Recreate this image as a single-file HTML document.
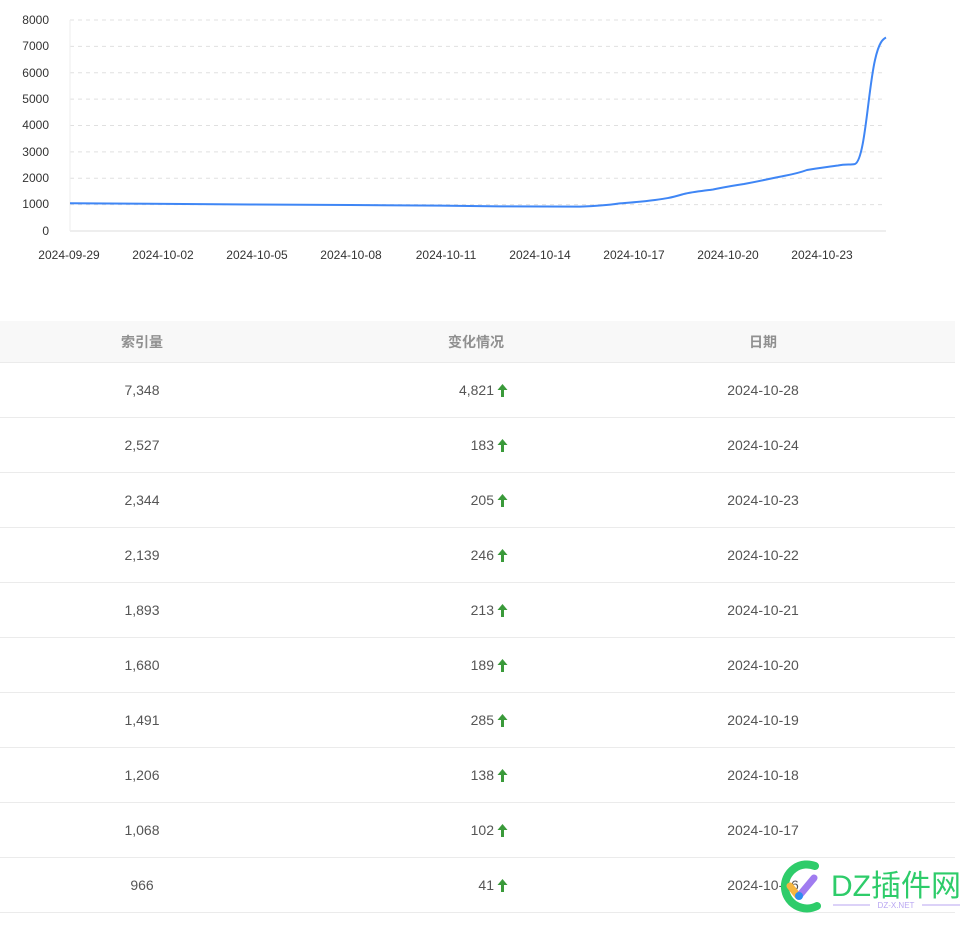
<!DOCTYPE html>
<html><head><meta charset="utf-8"><style>
body{margin:0;background:#fff;font-family:"Liberation Sans","Noto Sans CJK SC",sans-serif;width:980px;height:929px;overflow:hidden;position:relative}
svg text{font-family:"Liberation Sans",sans-serif;font-size:12px;fill:#333}
.tbl{position:absolute;left:0;top:321px;width:955px}
.row{height:54px;border-bottom:1px solid #ebebeb;position:relative;font-size:14px;color:#555}
.hd{height:41px;background:#f8f8f8;border-bottom:1px solid #ebebeb;color:#909090;font-weight:bold}
.c1,.c3{position:absolute;width:200px;text-align:center}
.c1{left:42px}.c3{left:663px}
.c2{position:absolute;right:447px;text-align:right}
.hd .c2{right:auto;left:376px;width:200px;text-align:center}
.row>div{top:50%;transform:translateY(-50%);line-height:16px}
.ar{display:inline-block;vertical-align:-2px;margin-left:3px}
</style></head><body>
<svg width="980" height="300" style="position:absolute;left:0;top:0">
<g stroke="#e0e0e0" stroke-dasharray="4,4">
<line x1="70" x2="886" y1="20" y2="20"/><line x1="70" x2="886" y1="46.4" y2="46.4"/><line x1="70" x2="886" y1="72.8" y2="72.8"/><line x1="70" x2="886" y1="99.1" y2="99.1"/><line x1="70" x2="886" y1="125.5" y2="125.5"/><line x1="70" x2="886" y1="151.9" y2="151.9"/><line x1="70" x2="886" y1="178.3" y2="178.3"/><line x1="70" x2="886" y1="204.6" y2="204.6"/>
</g>
<line x1="70" x2="886" y1="231" y2="231" stroke="#ddd"/>
<line x1="70" x2="70" y1="20" y2="231" stroke="#eee"/>
<g text-anchor="end"><text x="49" y="24">8000</text><text x="49" y="50">7000</text><text x="49" y="77">6000</text><text x="49" y="103">5000</text><text x="49" y="129">4000</text><text x="49" y="156">3000</text><text x="49" y="182">2000</text><text x="49" y="208">1000</text><text x="49" y="235">0</text></g>
<g text-anchor="middle"><text x="69" y="259">2024-09-29</text><text x="163" y="259">2024-10-02</text><text x="257" y="259">2024-10-05</text><text x="351" y="259">2024-10-08</text><text x="446" y="259">2024-10-11</text><text x="540" y="259">2024-10-14</text><text x="634" y="259">2024-10-17</text><text x="728" y="259">2024-10-20</text><text x="822" y="259">2024-10-23</text></g>
<path d="M70,203.2 L150,203.8 L250,204.5 L350,205 L440,205.6 L500,206.4 L580,206.6 C595,206 605,205.5 618,203.6 C630,202.5 640,202 655,200 C665,198.7 670,198 682,194.5 C690,192 697,191.7 713,189.5 C723,187.5 730,186 744,184 C755,182 762,180.5 776,177.5 C785,175.5 795,174.5 807,170 C818,168 828,167 838,165.5 C846,164 850,165 855,164 C865,160 868,90 875,60 C879,42 883,39 886,37.5" fill="none" stroke="#3f86f5" stroke-width="2"/>
</svg>
<div class="tbl">
<div class="row hd"><div class="c1">索引量</div><div class="c2">变化情况</div><div class="c3">日期</div></div>
<div class="row"><div class="c1">7,348</div><div class="c2">4,821<svg class="ar" width="11" height="13"><path d="M5.5,0 L0.5,6 H4 V13 H7 V6 H10.5 Z" fill="#3a9a3a"/></svg></div><div class="c3">2024-10-28</div></div>
<div class="row"><div class="c1">2,527</div><div class="c2">183<svg class="ar" width="11" height="13"><path d="M5.5,0 L0.5,6 H4 V13 H7 V6 H10.5 Z" fill="#3a9a3a"/></svg></div><div class="c3">2024-10-24</div></div>
<div class="row"><div class="c1">2,344</div><div class="c2">205<svg class="ar" width="11" height="13"><path d="M5.5,0 L0.5,6 H4 V13 H7 V6 H10.5 Z" fill="#3a9a3a"/></svg></div><div class="c3">2024-10-23</div></div>
<div class="row"><div class="c1">2,139</div><div class="c2">246<svg class="ar" width="11" height="13"><path d="M5.5,0 L0.5,6 H4 V13 H7 V6 H10.5 Z" fill="#3a9a3a"/></svg></div><div class="c3">2024-10-22</div></div>
<div class="row"><div class="c1">1,893</div><div class="c2">213<svg class="ar" width="11" height="13"><path d="M5.5,0 L0.5,6 H4 V13 H7 V6 H10.5 Z" fill="#3a9a3a"/></svg></div><div class="c3">2024-10-21</div></div>
<div class="row"><div class="c1">1,680</div><div class="c2">189<svg class="ar" width="11" height="13"><path d="M5.5,0 L0.5,6 H4 V13 H7 V6 H10.5 Z" fill="#3a9a3a"/></svg></div><div class="c3">2024-10-20</div></div>
<div class="row"><div class="c1">1,491</div><div class="c2">285<svg class="ar" width="11" height="13"><path d="M5.5,0 L0.5,6 H4 V13 H7 V6 H10.5 Z" fill="#3a9a3a"/></svg></div><div class="c3">2024-10-19</div></div>
<div class="row"><div class="c1">1,206</div><div class="c2">138<svg class="ar" width="11" height="13"><path d="M5.5,0 L0.5,6 H4 V13 H7 V6 H10.5 Z" fill="#3a9a3a"/></svg></div><div class="c3">2024-10-18</div></div>
<div class="row"><div class="c1">1,068</div><div class="c2">102<svg class="ar" width="11" height="13"><path d="M5.5,0 L0.5,6 H4 V13 H7 V6 H10.5 Z" fill="#3a9a3a"/></svg></div><div class="c3">2024-10-17</div></div>
<div class="row"><div class="c1">966</div><div class="c2">41<svg class="ar" width="11" height="13"><path d="M5.5,0 L0.5,6 H4 V13 H7 V6 H10.5 Z" fill="#3a9a3a"/></svg></div><div class="c3">2024-10-16</div></div>
</div>
<svg width="200" height="60" style="position:absolute;left:775px;top:858px">
<path d="M40,8 A22,22 0 1 0 42,48" fill="none" stroke="#2ecc6a" stroke-width="8" stroke-linecap="round"/>
<line x1="15" y1="28" x2="23" y2="38" stroke="#f5b640" stroke-width="7" stroke-linecap="round"/>
<line x1="24" y1="38" x2="39" y2="20" stroke="#a07cf0" stroke-width="7" stroke-linecap="round"/>
<circle cx="24" cy="38" r="4" fill="#2d8cf0"/>
<text x="56" y="38" style="font-size:30px;fill:#2ecc6a;font-family:'Liberation Sans','Noto Sans CJK SC',sans-serif">DZ插件网</text>
<line x1="58" y1="47" x2="95" y2="47" stroke="#b9a6f2"/><line x1="147" y1="47" x2="185" y2="47" stroke="#b9a6f2"/>
<text x="121" y="50" text-anchor="middle" style="font-size:8px;fill:#b9a6f2">DZ-X.NET</text>
</svg>
</body></html>
